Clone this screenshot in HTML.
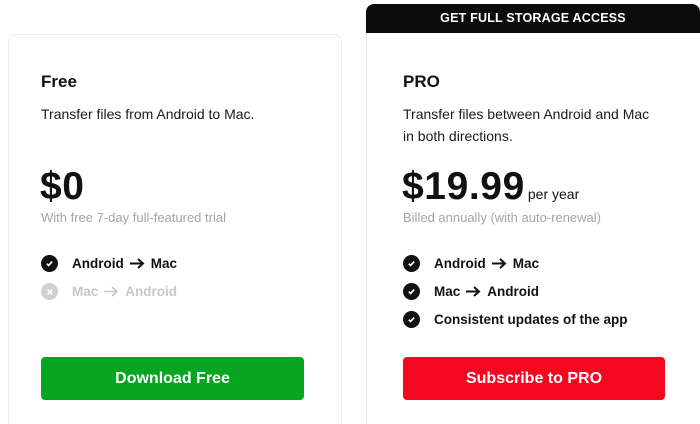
<!DOCTYPE html>
<html><head><style>
*{margin:0;padding:0;box-sizing:border-box}
html,body{width:700px;height:424px;overflow:hidden}
body{background:#fff;font-family:"Liberation Sans",Arial,sans-serif;position:relative;color:#111}
.card{position:absolute;border:1px solid #f2ecec;border-bottom:none;border-radius:8px 8px 0 0;background:#fff}
.a{position:absolute;white-space:nowrap}
.t{font-size:17px;font-weight:900}
.d{font-size:14px;line-height:22px;color:#1a1a1a}
.p{font-size:39px;font-weight:900;letter-spacing:0.6px}
.s{font-size:13px;color:#a5a5a5}
.li{font-size:13.5px;font-weight:700;display:flex;align-items:center}
.ic{width:17px;height:17px;border-radius:50%;background:#111;display:inline-flex;align-items:center;justify-content:center;margin-right:14px}
.ar{margin:0 6px;vertical-align:middle}
.btn{position:absolute;height:43px;border-radius:4px;color:#fff;font-weight:700;font-size:16px;display:flex;align-items:center;justify-content:center}
</style></head><body>
<div class="card" style="left:8px;top:34px;width:334px;height:390px"></div>
<div class="card" style="left:366px;top:4px;width:334px;height:420px;border-color:#eee;border-right:none"></div>
<div class="a" style="left:366px;top:4px;width:334px;height:29px;background:#0b0b0b;border-radius:8px 8px 0 0;color:#fff;font-size:12.5px;font-weight:700;text-align:center;line-height:29px;letter-spacing:0.2px">GET FULL STORAGE ACCESS</div>

<div class="a t" style="left:41px;top:72px">Free</div>
<div class="a d" style="left:41px;top:103px">Transfer files from Android to Mac.</div>
<div class="a p" style="left:40px;top:165px">$0</div>
<div class="a s" style="left:41px;top:210px">With free 7-day full-featured trial</div>
<div class="a li" style="left:41px;top:255px"><span class="ic"><svg width="9" height="9" viewBox="0 0 10 10"><path d="M2 5.2l2 2 4-4.4" stroke="#fff" stroke-width="1.8" fill="none"/></svg></span>Android<svg class="ar" width="15" height="11" viewBox="0 0 15 11"><path d="M0 5.5h13M8 1l5 4.5-5 4.5" stroke="#111" stroke-width="2" fill="none"/></svg>Mac</div>
<div class="a li" style="left:41px;top:283px;color:#c8c8c8"><span class="ic" style="background:#d0d0d0"><svg width="8" height="8" viewBox="0 0 10 10"><path d="M2 2l6 6M8 2l-6 6" stroke="#fff" stroke-width="2"/></svg></span>Mac<svg class="ar" width="15" height="11" viewBox="0 0 15 11"><path d="M0 5.5h13M8 1l5 4.5-5 4.5" stroke="#c8c8c8" stroke-width="1.6" fill="none"/></svg>Android</div>
<div class="btn" style="left:41px;top:357px;width:263px;background:#07a622">Download Free</div>

<div class="a t" style="left:403px;top:72px">PRO</div>
<div class="a d" style="left:403px;top:103px">Transfer files between Android and Mac<br>in both directions.</div>
<div class="a p" style="left:402px;top:165px">$19.99<span style="font-size:14px;font-weight:400;letter-spacing:0;margin-left:3px">per year</span></div>
<div class="a s" style="left:403px;top:210px">Billed annually (with auto-renewal)</div>
<div class="a li" style="left:403px;top:255px"><span class="ic"><svg width="9" height="9" viewBox="0 0 10 10"><path d="M2 5.2l2 2 4-4.4" stroke="#fff" stroke-width="1.8" fill="none"/></svg></span>Android<svg class="ar" width="15" height="11" viewBox="0 0 15 11"><path d="M0 5.5h13M8 1l5 4.5-5 4.5" stroke="#111" stroke-width="2" fill="none"/></svg>Mac</div>
<div class="a li" style="left:403px;top:283px"><span class="ic"><svg width="9" height="9" viewBox="0 0 10 10"><path d="M2 5.2l2 2 4-4.4" stroke="#fff" stroke-width="1.8" fill="none"/></svg></span>Mac<svg class="ar" width="15" height="11" viewBox="0 0 15 11"><path d="M0 5.5h13M8 1l5 4.5-5 4.5" stroke="#111" stroke-width="2" fill="none"/></svg>Android</div>
<div class="a li" style="left:403px;top:311px"><span class="ic"><svg width="9" height="9" viewBox="0 0 10 10"><path d="M2 5.2l2 2 4-4.4" stroke="#fff" stroke-width="1.8" fill="none"/></svg></span>Consistent updates of the app</div>
<div class="btn" style="left:403px;top:357px;width:262px;background:#f5071f">Subscribe to PRO</div>
</body></html>
